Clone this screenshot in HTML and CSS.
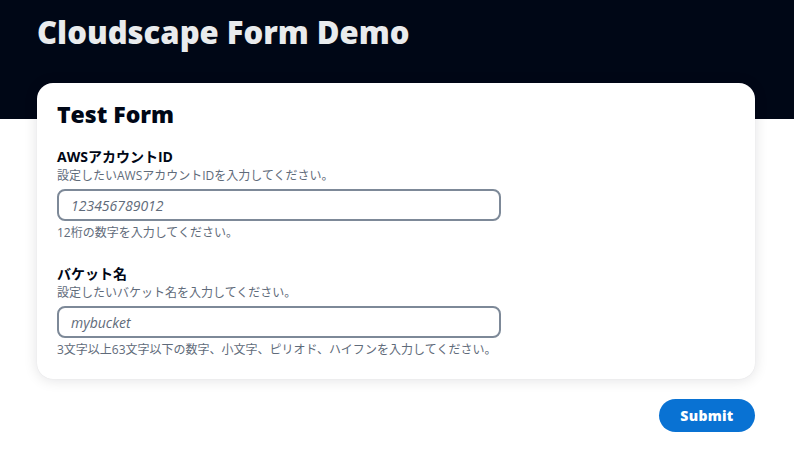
FILE: index.html
```html
<!DOCTYPE html>
<html lang="ja">
<head>
<meta charset="utf-8">
<link rel="stylesheet" href="styles.css">
</head>
<body>
<div class="page">
  <header class="top">
    <h1 class="title">Cloudscape Form Demo</h1>
  </header>
  <main class="content">
    <section class="card">
      <h2 class="card-title">Test Form</h2>
      <div class="field">
        <div class="label">AWSアカウントID</div>
        <div class="desc">設定したいAWSアカウントIDを入力してください。</div>
        <div class="input"><span class="placeholder">123456789012</span></div>
        <div class="hint">12桁の数字を入力してください。</div>
      </div>
      <div class="field">
        <div class="label">バケット名</div>
        <div class="desc">設定したいバケット名を入力してください。</div>
        <div class="input"><span class="placeholder">mybucket</span></div>
        <div class="hint">3文字以上63文字以下の数字、小文字、ピリオド、ハイフンを入力してください。</div>
      </div>
    </section>
    <div class="actions">
      <button class="submit">Submit</button>
    </div>
  </main>
</div>
</body>
</html>
```
FILE: styles.css
```css
* { box-sizing: border-box; }
html, body { margin: 0; padding: 0; background: #ffffff; }
body {
  font-family: "Open Sans", "Noto Sans CJK JP", sans-serif;
  color: #000716;
}
.page { position: relative; }
.top {
  background: #000716;
  height: 119px;
  padding: 12px 37px 0;
}
.title {
  margin: 0;
  font-size: 31px;
  line-height: 40px;
  font-weight: 800;
  color: #e9ebed;
}
.content {
  margin-top: -36px;
  padding: 0 39px 0 37px;
}
.card {
  background: #ffffff;
  border-radius: 16px;
  box-shadow: 0 1px 14px rgba(0, 7, 22, 0.12), 0 0 1px rgba(0, 7, 22, 0.1);
  padding: 16px 20px 21px 20px;
}
.card-title {
  margin: 0 0 19px;
  font-size: 23px;
  line-height: 30px;
  font-weight: 800;
  color: #000716;
}
.field + .field { margin-top: 24px; }
.label {
  font-size: 14px;
  line-height: 18px;
  font-weight: 700;
  color: #000716;
}
.desc, .hint {
  font-size: 12px;
  line-height: 16px;
  color: #5f6b7a;
}
.desc { margin-top: 2px; }
.input {
  margin-top: 5px;
  width: 444px;
  height: 32px;
  border: 2px solid #7d8998;
  border-radius: 8px;
  padding: 0 12px;
  display: flex;
  align-items: center;
}
.placeholder {
  font-style: italic;
  font-size: 14px;
  color: #5f6b7a;
}
.hint { margin-top: 4px; }
.actions {
  display: flex;
  justify-content: flex-end;
  margin-top: 20px;
}
.submit {
  font-family: "Open Sans", sans-serif;
  background: #0972d3;
  color: #ffffff;
  border: none;
  border-radius: 20px;
  font-weight: 800;
  font-size: 14px;
  letter-spacing: 0.3px;
  width: 96px;
  height: 33px;
  padding: 0;
}
```
